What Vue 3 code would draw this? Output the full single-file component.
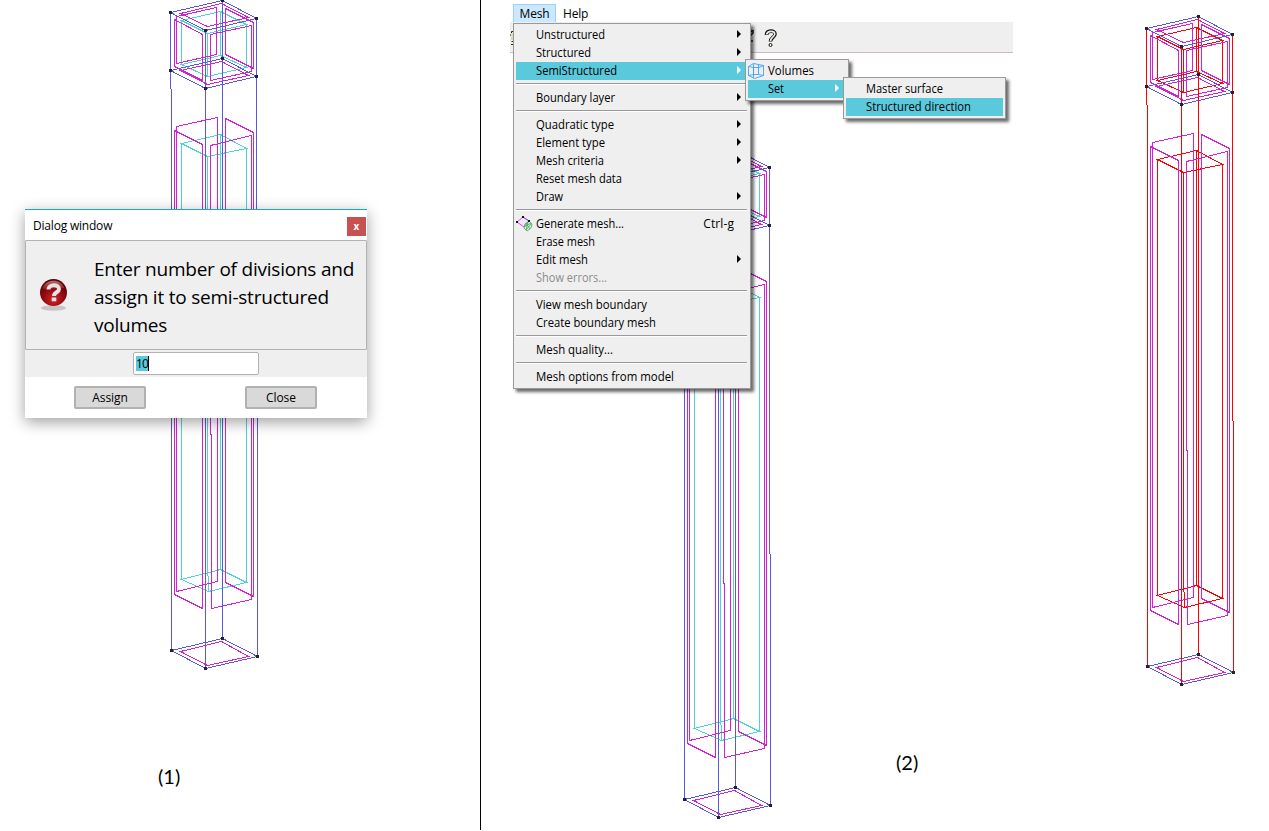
<script setup>
const box = (pts) => pts.map((p) => p.join(',')).join(' ')

const faces = [
  [[180, 13], [221, 3], [248, 17], [207, 26]],
  [[180, 70], [221, 61], [248, 75], [207, 84]],
  [[176, 16], [216, 7], [216, 54], [176, 63]],
  [[225, 8], [253, 22], [253, 68], [225, 54]],
  [[174, 19], [202, 34], [202, 80], [174, 66]],
  [[210, 34], [251, 25], [251, 71], [210, 80]],
  [[176, 126], [217, 117], [217, 581], [176, 591]],
  [[225, 118], [253, 132], [253, 596], [225, 582]],
  [[174, 130], [202, 144], [202, 608], [174, 594]],
  [[210, 145], [251, 135], [251, 599], [211, 608], [211, 434], [210, 434]],
  [[180, 651], [221, 641], [248, 656], [207, 665]]
].map(box)

const core = [
  [[181, 20], [220, 11], [246, 24], [207, 33]],
  [[181, 64], [220, 55], [246, 67], [207, 76]],
  [[181, 143], [220, 134], [246, 148], [207, 156]],
  [[181, 579], [220, 569], [246, 582], [208, 591]]
].map(box)
const coreEdges = 'M181 20V64M220 11V55M246 24V67M207 33V76M181 143V578M220 134V569M246 148V582M207 156V575M208 575V591'

const rims = [
  [[170, 12], [222, 0], [256, 18], [205, 30]],
  [[170, 70], [222, 58], [256, 76], [205, 88]],
  [[171, 650], [222, 638], [257, 656], [205, 668]]
].map(box)
const sides = 'M170 12V88M171 88V650M222 0V638M256 18V404M257 404V656M205 30V668'
const nodes = [[170, 12], [222, 0], [256, 18], [205, 30], [170, 70], [222, 58], [256, 76], [205, 88], [171, 650], [222, 638], [257, 656], [205, 668]]

const columns = [
  { x: 0, y: 0, cls: 'plain' },
  { x: 513, y: 149, cls: 'plain' },
  { x: 976, y: 16, cls: 'picked' }
]

const menu = [
  [{ t: 'Unstructured', sub: true, w: 69 }, { t: 'Structured', sub: true, w: 55 }, { t: 'SemiStructured', sub: true, on: true, w: 81 }],
  [{ t: 'Boundary layer', sub: true, w: 79 }],
  [{ t: 'Quadratic type', sub: true, w: 78 }, { t: 'Element type', sub: true, w: 69 }, { t: 'Mesh criteria', sub: true, w: 68 }, { t: 'Reset mesh data', w: 86 }, { t: 'Draw', sub: true, w: 27 }],
  [{ t: 'Generate mesh...', icon: true, key: 'Ctrl-g', w: 88 }, { t: 'Erase mesh', w: 59 }, { t: 'Edit mesh', sub: true, w: 52 }, { t: 'Show errors...', off: true, w: 71 }],
  [{ t: 'View mesh boundary', w: 111 }, { t: 'Create boundary mesh', w: 120 }],
  [{ t: 'Mesh quality...', w: 77 }],
  [{ t: 'Mesh options from model', w: 138 }]
]
</script>

<template>
  <main class="stage">
    <svg class="drawing" width="1269" height="831" shape-rendering="crispEdges">
      <g v-for="c in columns" :key="c.x" :class="c.cls" :transform="`translate(${c.x + 0.5} ${c.y + 0.5})`">
        <g class="core">
          <polygon v-for="p in core" :key="p" :points="p" />
          <path :d="coreEdges" />
        </g>
        <g class="face"><polygon v-for="p in faces" :key="p" :points="p" /></g>
        <g class="rim"><polygon v-for="p in rims" :key="p" :points="p" /></g>
        <path class="side" :d="sides" />
        <rect v-for="n in nodes" :key="n.join()" class="node" :x="n[0] - 1.5" :y="n[1] - 1.5" width="3" height="3" />
      </g>
    </svg>
    <div class="divider"></div>

    <section class="dialog">
      <header class="title"><span>Dialog window</span><button class="close">x</button></header>
      <div class="message">
        <svg class="ask" width="30" height="36" viewBox="0 0 30 36">
          <defs>
            <radialGradient id="ball" cx=".5" cy=".75" r=".75"><stop offset="0" stop-color="#d8232a" /><stop offset=".5" stop-color="#930a10" /><stop offset="1" stop-color="#4c0205" /></radialGradient>
            <linearGradient id="shine" x1="0" y1="0" x2="0" y2="1"><stop offset="0" stop-color="#e09a9c" /><stop offset="1" stop-color="#a3161b" /></linearGradient>
          </defs>
          <ellipse cx="14.5" cy="30" rx="12.5" ry="2.8" fill="#c6c6c6" />
          <circle cx="14.5" cy="14.5" r="13.5" fill="url(#ball)" />
          <path d="M3.500 10.500C6.500 0 22.500 0 25.500 10.500C19.500 8 11 13 3.500 10.500Z" fill="url(#shine)" opacity=".7" />
          <path d="M9.500 11.500C9.500 5.800 20 5.800 20 11C20 14.500 15 14 15 18" fill="none" stroke="#e3e3e3" stroke-width="4" />
          <rect x="12.700" y="19.500" width="4.600" height="3.800" fill="#e3e3e3" />
        </svg>
        <p><span>Enter number of divisions and</span><br><span>assign it to semi-structured</span><br><span>volumes</span></p>
      </div>
      <div class="entry"><div class="field"><span class="selected">10</span></div></div>
      <footer class="actions"><button>Assign</button><button>Close</button></footer>
    </section>

    <nav class="menubar"><span class="open">Mesh</span><span class="help">Help</span></nav>
    <div class="toolbar">
      <svg width="503" height="30" fill="none">
        <path d="M1 11h2v7H1z" fill="#dcdcb8" /><path d="M3 9.500H1.500V11M0 12v2M1.500 19.500H3M3 22.500H1" stroke="#222" />
        <path d="M240 11l2.500-3M243 8v3l-3 3M241 19h2" stroke="#222" stroke-width="1.500" />
        <g transform="translate(254.500 7.500)"><path d="M2 5.500C2 .5 10.500 .5 10.500 4.500C10.500 8 6 8 6 12" stroke="#111" stroke-width="3.600" /><path d="M2 5C3 1 10 1 10.300 4.500C10 7.500 6 8 6 11.500" stroke="#e3eedf" stroke-width="1.700" /><circle cx="6" cy="15.500" r="1.500" stroke="#111" fill="#fff" /></g>
      </svg>
    </div>

    <section class="menu main-menu">
      <div v-for="(g, i) in menu" :key="i" class="group">
        <div v-for="m in g" :key="m.t" class="row" :class="{ on: m.on, off: m.off }">
          <svg v-if="m.icon" class="mesh-icon" width="18" height="16" viewBox="0 0 18 16" fill="none">
            <path d="M1 6L7 1L13 5L8 11Z" fill="#f5e5f7" stroke="#c955e8" /><path d="M7 1L13 5" stroke="#7c62f0" /><path d="M9 8l4-3 3 3-1 4-4 3-3-3ZM8 11l7-4M10 14l5-6M10 7l4 6M12 6l-2 8" stroke="#4cae5a" stroke-width=".9" /><path d="M0 5h2v2H0zM6 0h2v2H6zM12 4h2v2h-2z" fill="#111" />
          </svg>
          <svg class="label" :width="m.w + 2" height="18"><text x="0" y="13" :textLength="m.w" lengthAdjust="spacingAndGlyphs">{{ m.t }}</text></svg>
          <span v-if="m.key" class="key">{{ m.key }}</span>
          <i v-if="m.sub" class="arrow"></i>
        </div>
      </div>
    </section>
    <section class="menu volumes-menu">
      <div class="row">
        <svg class="volume-icon" width="17" height="16" fill="none" stroke="#3e9fff"><path d="M.5 3.500L5.500 .500L15.500 2.500V12.500L6.500 15.500L.500 12.500ZM.500 3.500L5.500 4.500H11L15.500 2.500M5.500 .500V11.500M10.500 1.500V11.500M5.500 4.500V15M.500 12.500L5.500 11.500H10.500L15.500 12.500" stroke-width=".9" /></svg>
        <svg class="label" width="48" height="18"><text y="13" textLength="46" lengthAdjust="spacingAndGlyphs">Volumes</text></svg>
      </div>
      <div class="row on"><svg class="label" width="20" height="18"><text y="13" textLength="16" lengthAdjust="spacingAndGlyphs">Set</text></svg><i class="arrow"></i></div>
    </section>
    <section class="menu set-menu">
      <div class="row"><svg class="label" width="80" height="18"><text y="13" textLength="77" lengthAdjust="spacingAndGlyphs">Master surface</text></svg></div>
      <div class="row on"><svg class="label" width="108" height="18"><text y="13" textLength="105" lengthAdjust="spacingAndGlyphs">Structured direction</text></svg></div>
    </section>

    <span class="caption one">(1)</span>
    <span class="caption two">(2)</span>
  </main>
</template>

<style>
html, body { margin: 0; background: #fff; overflow: hidden; }
</style>

<style scoped>
.stage { position: relative; width: 1269px; height: 831px; overflow: hidden; background: #fff; color: #000; font: 12px/18px "Open Sans", "Noto Sans", sans-serif; }
.drawing { position: absolute; left: 0; top: 0; fill: none; stroke-width: 1; }
.core { stroke: #4cd4d4; }
.face { stroke: #d41fd4; }
.rim, .side { stroke: #5759dc; }
.picked .core, .picked .side { stroke: #f00; }
.node { fill: #22222c; stroke: none; }
.divider { position: absolute; left: 480px; top: 0; width: 1px; height: 830px; background: #000; }

.dialog { position: absolute; left: 25px; top: 209px; width: 342px; height: 209px; box-sizing: border-box; border-top: 1px solid #18a8b8; background: #fff; box-shadow: 0 4px 14px rgba(0, 0, 0, .38); display: flex; flex-direction: column; }
.title { height: 30px; padding-left: 8px; display: flex; justify-content: space-between; line-height: 31px; letter-spacing: -.2px; }
.close { width: 19px; height: 19px; margin: 7px 1px 0 0; padding: 0 0 2px; border: 0; background: #c75050; color: #fff; font: bold 10px/16px "Open Sans", sans-serif; }
.message { height: 110px; box-sizing: border-box; border: 1px solid #b2b2b2; border-radius: 1px; background: #efefef; display: flex; align-items: flex-start; }
.ask { margin: 37px 0 0 13px; }
.message p { margin: 14px 0 0 25px; font-size: 19px; letter-spacing: -.22px; line-height: 28px; white-space: nowrap; }
.entry { display: flex; height: 27px; background: #efefef; padding-left: 108px; }
.field { width: 126px; height: 23px; margin-top: 2px; box-sizing: border-box; border: 1px solid #b2b2b2; border-radius: 2px; background: #fff; padding: 3px 2px; line-height: 15px; }
.selected { display: inline-block; height: 15px; line-height: 15px; background: #5ac9db; border-right: 1px solid #000; letter-spacing: -.9px; }
.actions { flex: 1; display: flex; gap: 99px; padding: 9px 0 0 49px; align-items: flex-start; }
.actions button { width: 72px; height: 23px; padding: 0; border: 2px solid #b1b1b1; border-radius: 2px; background: #d9d9d9; color: #000; font: 12px/18px "Open Sans", sans-serif; letter-spacing: -.1px; }

.menubar { position: absolute; left: 513px; top: 4px; height: 19px; display: flex; }
.open { width: 43px; box-sizing: border-box; border: 1px solid #99d1ff; background: #cce8ff; text-align: center; letter-spacing: -.2px; }
.help { margin-left: 7px; line-height: 20px; letter-spacing: -.2px; }
.toolbar { position: absolute; left: 510px; top: 22px; width: 503px; height: 30px; background: #efefef; border-bottom: 1px solid #c9bcbc; }

.menu { position: absolute; box-sizing: border-box; border: 1px solid #999; background: #efefef; padding: 2px; box-shadow: 3px 3px 3px rgba(0, 0, 0, .58); }
.main-menu { left: 513px; top: 23px; width: 238px; height: 366px; }
.volumes-menu { left: 745px; top: 59px; width: 104px; height: 42px; }
.set-menu { left: 843px; top: 77px; width: 163px; height: 42px; }
.group + .group::before { content: ""; display: block; width: 231px; height: 1px; margin: 3px 0 5px; background: #999; box-shadow: 0 1px #fff; }
.row { position: relative; height: 18px; padding-left: 20px; display: flex; align-items: center; }
.row.on { background: #5ac9db; }
.row.off { color: #8c8c8c; }
.label { display: block; fill: currentColor; overflow: visible; }
.key { position: absolute; right: 14px; top: 0; letter-spacing: .1px; }
.arrow { position: absolute; right: 7px; top: 4px; border-left: 4px solid #000; border-top: 4px solid transparent; border-bottom: 4px solid transparent; }
.on .arrow { border-left-color: #fff; }
.mesh-icon { position: absolute; left: 0; top: 1px; }
.volume-icon { position: absolute; left: 0; top: 1px; }

.caption { position: absolute; font-size: 20px; line-height: 24px; font-family: Lato, sans-serif; }
.one { left: 158px; top: 764px; }
.two { left: 896px; top: 750px; }
</style>
